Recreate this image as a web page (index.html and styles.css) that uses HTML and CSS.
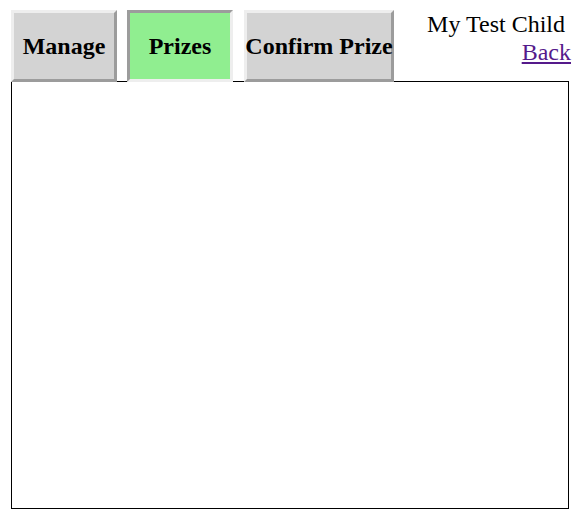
FILE: index.html
```html
<!DOCTYPE html>
<html>
<head>
<meta charset="utf-8">
<link rel="stylesheet" href="styles.css">
</head>
<body>
<div class="header">
  <div class="tabs">
    <div class="tab">Manage</div>
    <div class="tab tab-active">Prizes</div>
    <div class="tab tab-wide">Confirm Prize</div>
  </div>
  <div class="user">
    <div class="user-name">My Test Child</div>
    <a class="back" href="#">Back</a>
  </div>
</div>
<div class="panel"></div>
</body>
</html>
```

FILE: styles.css
```css
html, body {
  margin: 0;
  padding: 0;
  background: #fff;
}
body {
  font-family: "Liberation Serif", "Times New Roman", serif;
  font-size: 24px;
  color: #000;
}
.header {
  display: flex;
  align-items: flex-start;
  padding: 8px 3px 0 11px;
}
.tabs {
  display: flex;
  gap: 10px;
  margin-top: 2px;
  position: relative;
  z-index: 1;
}
.tab {
  box-sizing: border-box;
  min-width: 106px;
  height: 72px;
  border: 3px solid;
  border-color: #eeeeee #9c9c9c #9c9c9c #eeeeee;
  background: #d3d3d3;
  font-weight: bold;
  display: flex;
  align-items: center;
  justify-content: center;
  white-space: nowrap;
}
.tab-active {
  background: #90ee90;
  border-color: #9c9c9c #eeeeee #eeeeee #9c9c9c;
}
.tab-wide {
  margin-left: 1px;
  width: 150px;
}
.user {
  margin-left: auto;
  padding-top: 2px;
  text-align: right;
  line-height: 28px;
}
.user-name {
  padding-right: 6px;
}
.back {
  color: #551a8b;
  text-decoration: underline;
}
.panel {
  box-sizing: border-box;
  margin: -1px 0 0 11px;
  width: 558px;
  height: 428px;
  border: 1px solid #000;
}
```
